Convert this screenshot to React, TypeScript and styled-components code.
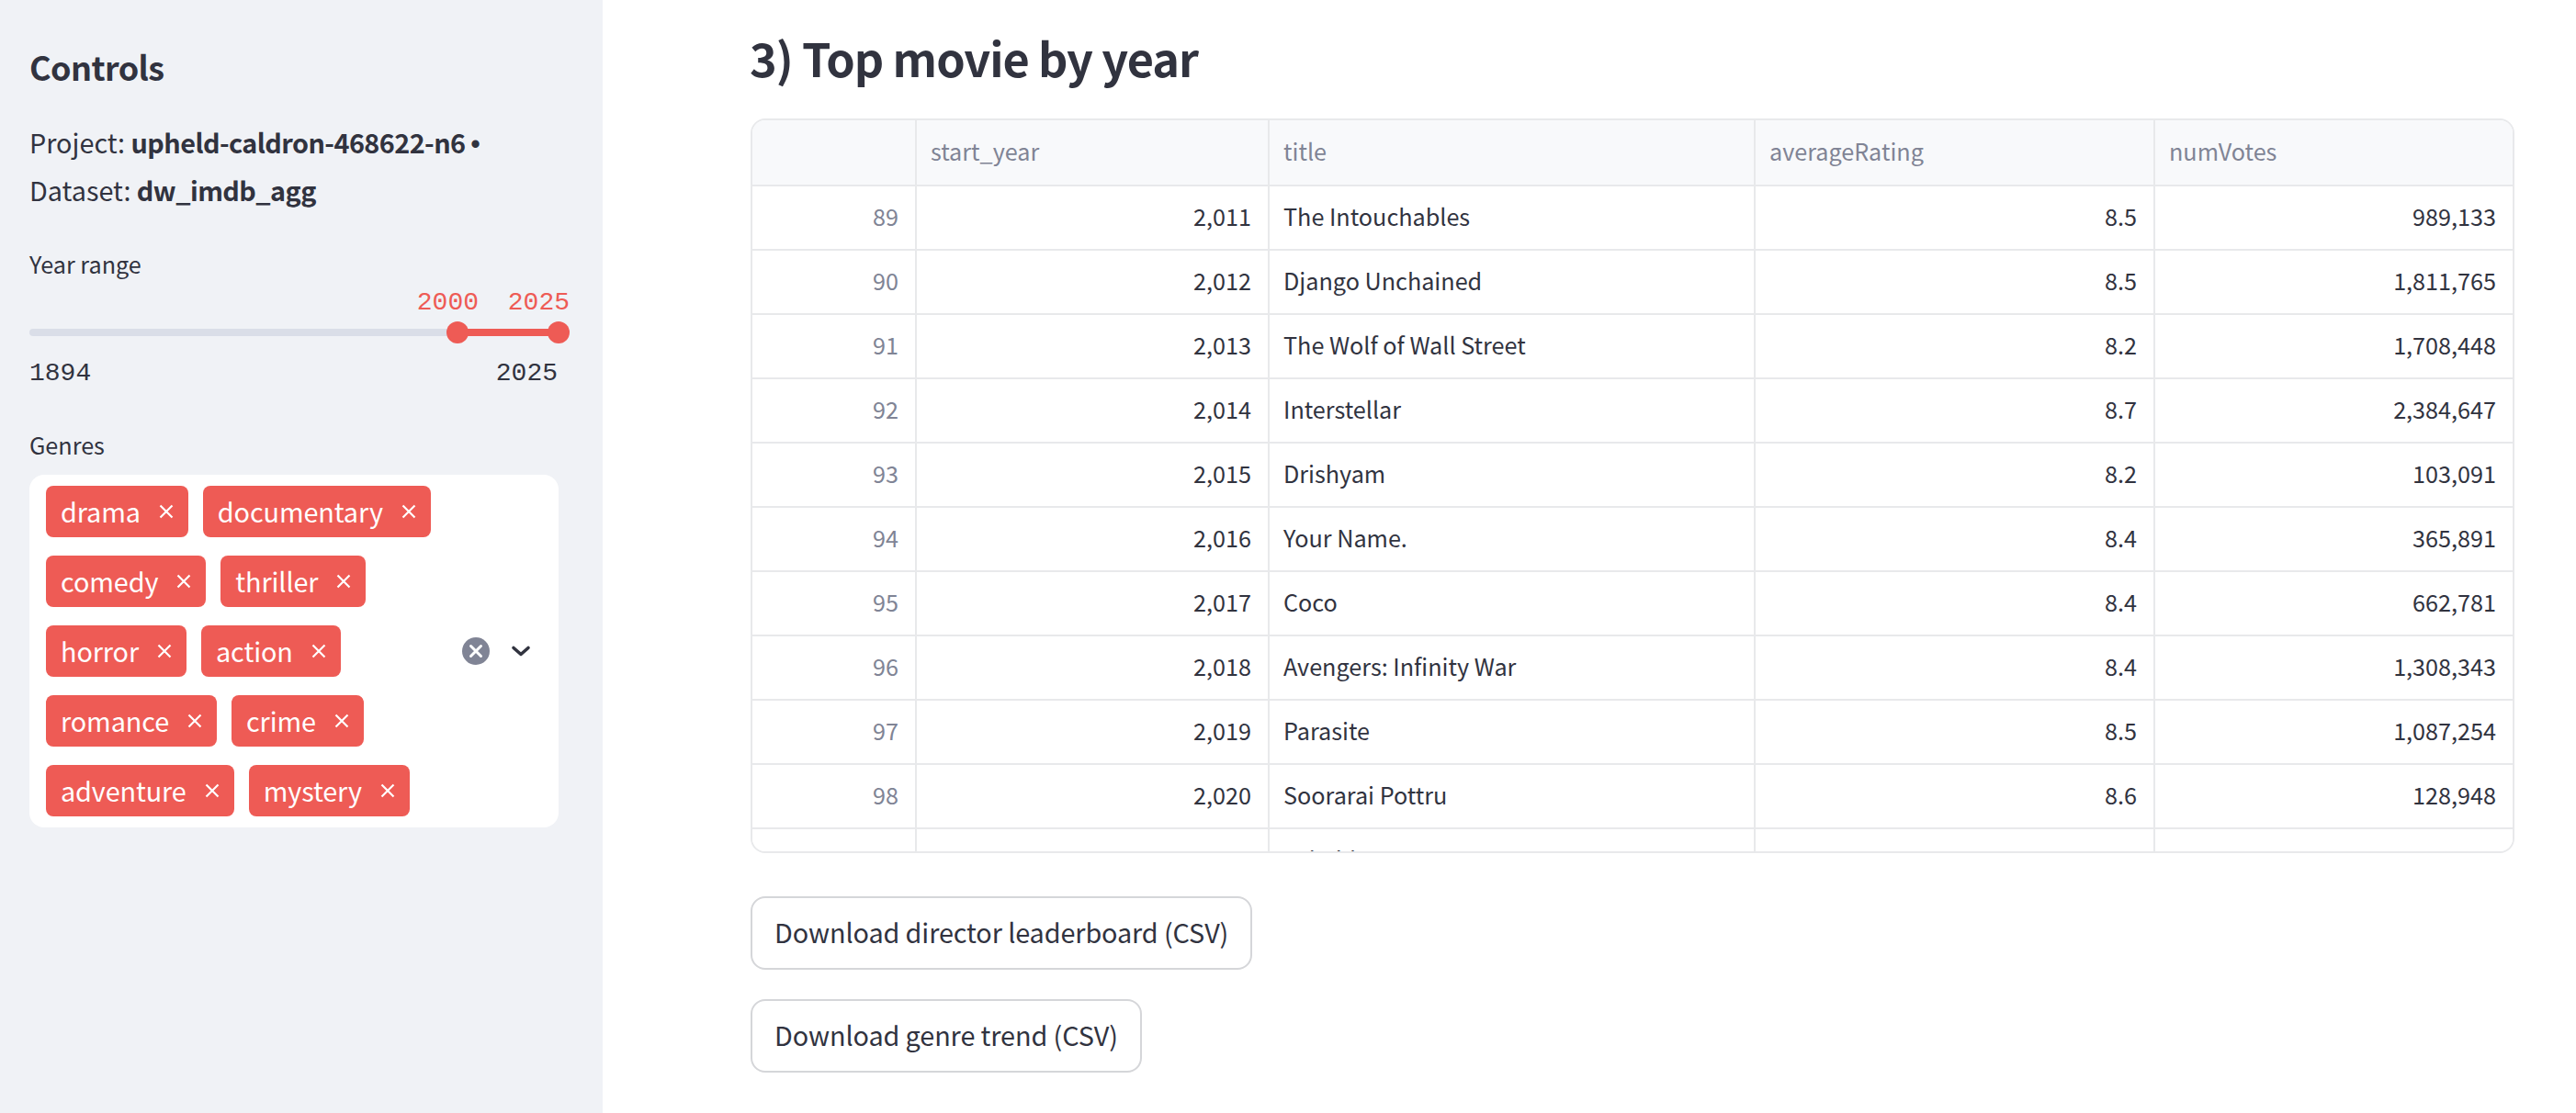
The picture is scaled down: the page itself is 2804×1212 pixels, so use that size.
import React from "react";
import styled, { createGlobalStyle } from "styled-components";

const SANS = `"Noto Sans CJK SC", "Noto Sans", sans-serif`;
const MONO = `"Liberation Mono", monospace`;
const INK = "#31333f";
const RED = "#ee5b55";
const LINE = "#e8e9eb";

const Global = createGlobalStyle`
  html, body { margin: 0; padding: 0; background: #fff; }
  body { font-family: ${SANS}; color: ${INK}; overflow: hidden; }
  * { box-sizing: border-box; }
`;

const Page = styled.div`
  display: flex;
  width: 2804px;
  height: 1212px;
  overflow: hidden;
`;

const Sidebar = styled.aside`
  width: 656px;
  flex: none;
  background: #f0f2f6;
  padding: 53px 48px 0 32px;
  display: flex;
  flex-direction: column;
`;

const SideTitle = styled.h2`
  margin: 0 0 38px;
  font-size: 36px;
  line-height: 38px;
  font-weight: 600;
  letter-spacing: -0.6px;
`;

const Meta = styled.p`
  margin: 0 0 36px;
  font-size: 28.8px;
  line-height: 52px;
  font-weight: 400;
  white-space: nowrap;
  b { font-weight: 600; letter-spacing: -0.55px; }
`;

const Bullet = styled.span`
  margin-left: 6px;
  font-family: "Liberation Sans", sans-serif;
  font-weight: 700;
  line-height: 0;
`;

const FieldLabel = styled.div`
  font-size: 25.2px;
  line-height: 36px;
`;

const SliderBlock = styled.div`
  width: 576px;
  margin-top: 53px;
  margin-bottom: 43px;
`;

const Track = styled.div`
  position: relative;
  height: 8px;
  border-radius: 4px;
  background: #dadee8;
`;

const ActiveTrack = styled.div`
  position: absolute;
  top: 0;
  height: 8px;
  background: ${RED};
`;

const Thumb = styled.div`
  position: absolute;
  top: -8px;
  width: 24px;
  height: 24px;
  margin-left: -12px;
  border-radius: 50%;
  background: ${RED};
`;

const ThumbValue = styled.span<{ $offset: number }>`
  position: absolute;
  bottom: 30px;
  right: ${(p) => p.$offset}px;
  font-family: ${MONO};
  font-size: 28px;
  line-height: 28px;
  color: ${RED};
`;

const Ends = styled.div`
  display: flex;
  justify-content: space-between;
  margin-top: 25px;
  padding-right: 1px;
  font-family: ${MONO};
  font-size: 28px;
  line-height: 32px;
`;

const Select = styled.div`
  width: 576px;
  margin-top: 15px;
  background: #fff;
  border-radius: 16px;
  padding: 12px 18px;
  display: flex;
  align-items: center;
`;

const TagRows = styled.div`
  flex: 1;
  min-width: 0;
  display: flex;
  flex-direction: column;
  gap: 20px;
`;

const TagRow = styled.div`
  display: flex;
  gap: 16px;
`;

const Tag = styled.span`
  height: 56px;
  display: inline-flex;
  align-items: center;
  gap: 20px;
  padding: 0 16px;
  border-radius: 8px;
  background: ${RED};
  color: #fff;
  font-size: 28.8px;
  line-height: 56px;
  letter-spacing: -0.1px;
`;

const TagClose = styled.svg`
  width: 16px;
  height: 16px;
  flex: none;
`;

const SelectTools = styled.div`
  display: flex;
  align-items: center;
  gap: 23px;
  padding-right: 12px;
`;

const Main = styled.main`
  flex: 1;
  min-width: 0;
  padding: 30px 67px 0 161px;
`;

const Heading = styled.h3`
  margin: 0 0 34px -1px;
  font-size: 50.4px;
  line-height: 65px;
  font-weight: 600;
  letter-spacing: -1.05px;
`;

const TableFrame = styled.div`
  height: 800px;
  border: 2px solid ${LINE};
  border-radius: 16px;
  overflow: hidden;
`;

const Row = styled.div<{ $head?: boolean }>`
  display: grid;
  grid-template-columns: 179px 384px 529px 435px 1fr;
  height: ${(p) => (p.$head ? 72 : 70)}px;
  border-bottom: 2px solid ${LINE};
  background: ${(p) => (p.$head ? "#f8f9fb" : "#fff")};
`;

const Cell = styled.div<{ $right?: boolean; $muted?: boolean }>`
  display: flex;
  align-items: center;
  justify-content: ${(p) => (p.$right ? "flex-end" : "flex-start")};
  padding: 0 ${(p) => (p.$right ? 18 : 16)}px 5px 15px;
  border-right: 2px solid ${LINE};
  font-size: 25.2px;
  line-height: 36px;
  color: ${(p) => (p.$muted ? "#808495" : INK)};
  white-space: nowrap;
  &:last-child { border-right: 0; }
`;

const DownloadList = styled.div`
  display: flex;
  flex-direction: column;
  align-items: flex-start;
  gap: 32px;
  margin-top: 47px;
`;

const Download = styled.button`
  height: 80px;
  padding: 0 24px 2px;
  background: #fff;
  border: 2px solid #d5d6d9;
  border-radius: 16px;
  color: ${INK};
  font-family: ${SANS};
  font-size: 28.8px;
  line-height: 40px;
  letter-spacing: -0.1px;
`;

const rows: [number, string, string, string, string][] = [
  [89, "2,011", "The Intouchables", "8.5", "989,133"],
  [90, "2,012", "Django Unchained", "8.5", "1,811,765"],
  [91, "2,013", "The Wolf of Wall Street", "8.2", "1,708,448"],
  [92, "2,014", "Interstellar", "8.7", "2,384,647"],
  [93, "2,015", "Drishyam", "8.2", "103,091"],
  [94, "2,016", "Your Name.", "8.4", "365,891"],
  [95, "2,017", "Coco", "8.4", "662,781"],
  [96, "2,018", "Avengers: Infinity War", "8.4", "1,308,343"],
  [97, "2,019", "Parasite", "8.5", "1,087,254"],
  [98, "2,020", "Soorarai Pottru", "8.6", "128,948"],
  [99, "2,021", "Jai Bhim", "8.7", "217,042"],
];

const tagRows = [
  ["drama", "documentary"],
  ["comedy", "thriller"],
  ["horror", "action"],
  ["romance", "crime"],
  ["adventure", "mystery"],
];

const Cross = () => (
  <TagClose viewBox="0 0 16 16">
    <path d="M1.5 1.5 14.5 14.5M14.5 1.5 1.5 14.5" stroke="#fff" strokeWidth="2.2" fill="none" />
  </TagClose>
);

export default function App() {
  return (
    <Page>
      <Global />
      <Sidebar>
        <SideTitle>Controls</SideTitle>
        <Meta>
          Project: <b>upheld-caldron-468622-n6</b>
          <Bullet>•</Bullet>
          <br />
          Dataset: <b>dw_imdb_agg</b>
        </Meta>
        <FieldLabel>Year range</FieldLabel>
        <SliderBlock>
          <Track>
            <ActiveTrack style={{ left: 466, width: 110 }} />
            <Thumb style={{ left: 466 }}>
              <ThumbValue $offset={-11}>2000</ThumbValue>
            </Thumb>
            <Thumb style={{ left: 576 }}>
              <ThumbValue $offset={0}>2025</ThumbValue>
            </Thumb>
          </Track>
          <Ends>
            <span>1894</span>
            <span>2025</span>
          </Ends>
        </SliderBlock>
        <FieldLabel>Genres</FieldLabel>
        <Select>
          <TagRows>
            {tagRows.map((r) => (
              <TagRow key={r[0]}>
                {r.map((t) => (
                  <Tag key={t}>
                    {t}
                    <Cross />
                  </Tag>
                ))}
              </TagRow>
            ))}
          </TagRows>
          <SelectTools>
            <svg width="30" height="30" viewBox="0 0 30 30">
              <circle cx="15" cy="15" r="15" fill="#808495" />
              <path d="M9.5 9.5 20.5 20.5M20.5 9.5 9.5 20.5" stroke="#fff" strokeWidth="3" strokeLinecap="round" />
            </svg>
            <svg width="22" height="14" viewBox="0 0 22 14">
              <path d="M3 3.5 11 10.5 19 3.5" stroke={INK} strokeWidth="3.6" strokeLinecap="round" strokeLinejoin="round" fill="none" />
            </svg>
          </SelectTools>
        </Select>
      </Sidebar>
      <Main>
        <Heading>3) Top movie by year</Heading>
        <TableFrame>
          <Row $head>
            <Cell />
            <Cell $muted>start_year</Cell>
            <Cell $muted>title</Cell>
            <Cell $muted>averageRating</Cell>
            <Cell $muted>numVotes</Cell>
          </Row>
          {rows.map((r) => (
            <Row key={r[0]}>
              <Cell $right $muted>{r[0]}</Cell>
              <Cell $right>{r[1]}</Cell>
              <Cell>{r[2]}</Cell>
              <Cell $right>{r[3]}</Cell>
              <Cell $right>{r[4]}</Cell>
            </Row>
          ))}
        </TableFrame>
        <DownloadList>
          <Download>Download director leaderboard (CSV)</Download>
          <Download>Download genre trend (CSV)</Download>
        </DownloadList>
      </Main>
    </Page>
  );
}
